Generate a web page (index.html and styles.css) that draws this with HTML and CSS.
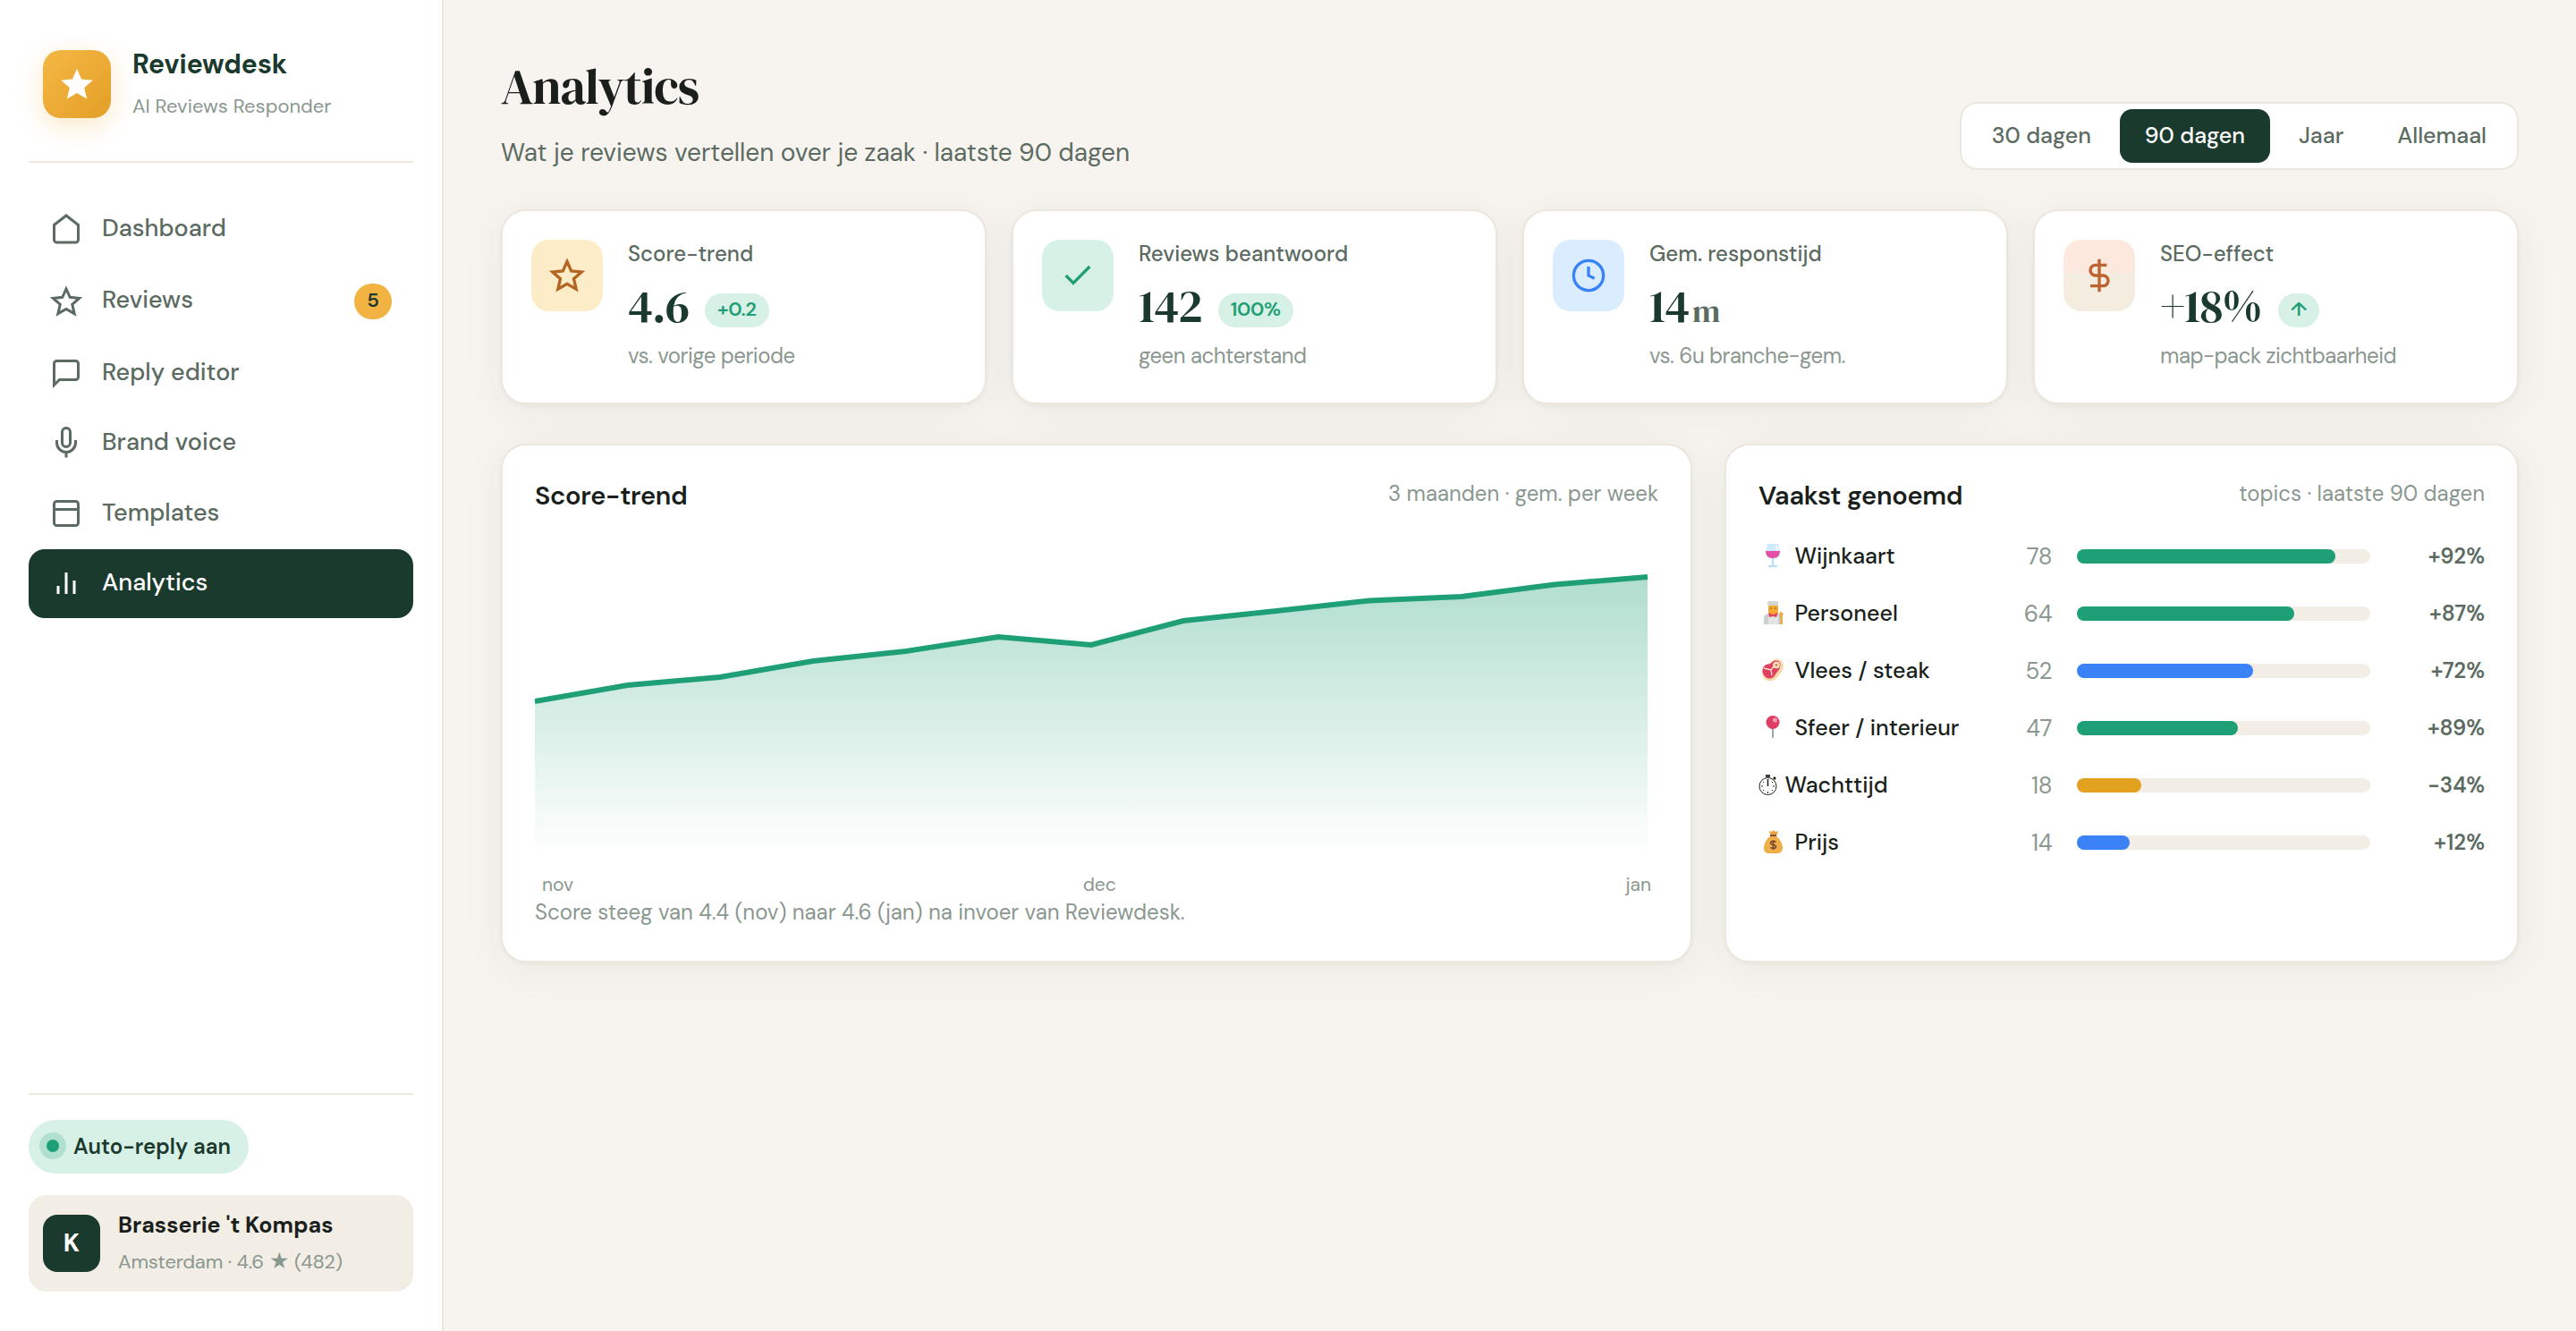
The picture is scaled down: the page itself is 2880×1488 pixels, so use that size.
FILE: index.html
```
<!DOCTYPE html>
<html lang="nl">
<head>
  <meta charset="UTF-8" />
  <meta name="viewport" content="width=device-width, initial-scale=1.0" />
  <title>Reviewdesk - Analytics</title>
  <link rel="stylesheet" href="styles.css">
</head>
<body>
  <aside class="sidebar">
    <div class="brand">
      <div class="brand-logo">
        <svg width="38" height="38" viewBox="0 0 24 24" fill="#fff"><path d="M12 1.2l3.2 7.4 8 .7-6 5.2 1.8 7.9L12 18.3l-7 4.1 1.8-7.9-6-5.2 8-.7z"/></svg>
      </div>
      <div class="brand-text">
        <div class="brand-name">Reviewdesk</div>
        <div class="brand-sub">AI Reviews Responder</div>
      </div>
    </div>

    <nav class="nav">
      <a class="nav-item"><svg viewBox="0 0 24 24"><path d="M3 9l9-7 9 7v11a2 2 0 0 1-2 2H5a2 2 0 0 1-2-2z"/></svg>Dashboard</a>
      <a class="nav-item"><svg viewBox="0 0 24 24"><path d="M12 2.6l2.8 6.3 7 .7-5.3 4.6 1.6 6.9L12 17.6l-6.1 3.5 1.6-6.9-5.3-4.6 7-.7z"/></svg>Reviews<span class="nav-badge">5</span></a>
      <a class="nav-item"><svg viewBox="0 0 24 24"><path d="M21 15a2 2 0 0 1-2 2H7l-4 4V5a2 2 0 0 1 2-2h14a2 2 0 0 1 2 2z"/></svg>Reply editor</a>
      <a class="nav-item"><svg viewBox="0 0 24 24"><path d="M12 1a3 3 0 0 0-3 3v8a3 3 0 0 0 6 0V4a3 3 0 0 0-3-3z"/><path d="M19 10v2a7 7 0 0 1-14 0v-2M12 19v4"/></svg>Brand voice</a>
      <a class="nav-item"><svg viewBox="0 0 24 24"><rect x="3" y="3" width="18" height="18" rx="2"/><path d="M3 9h18"/></svg>Templates</a>
      <a class="nav-item active"><svg viewBox="0 0 24 24"><path d="M18 20V10M12 20V4M6 20v-6"/></svg>Analytics</a>
    </nav>

    <div class="sidebar-bottom">
      <div class="status"><span class="status-dot"></span>Auto-reply aan</div>
      <div class="account">
        <div class="avatar">K</div>
        <div class="account-text">
          <div class="account-name">Brasserie 't Kompas</div>
          <div class="account-sub">Amsterdam · 4.6 ★ (482)</div>
        </div>
      </div>
    </div>
  </aside>

  <main class="main">
    <header class="page-header">
      <div>
        <h1>Analytics</h1>
        <p>Wat je reviews vertellen over je zaak · laatste 90 dagen</p>
      </div>
      <div class="range">
        <button>30 dagen</button>
        <button class="active">90 dagen</button>
        <button>Jaar</button>
        <button>Allemaal</button>
      </div>
    </header>

    <section class="kpis">
      <div class="card kpi">
        <div class="kpi-icon amber"><svg viewBox="0 0 24 24"><path d="M12 2.6l2.8 6.3 7 .7-5.3 4.6 1.6 6.9L12 17.6l-6.1 3.5 1.6-6.9-5.3-4.6 7-.7z"/></svg></div>
        <div>
          <div class="kpi-label">Score-trend</div>
          <div class="kpi-row"><span class="kpi-value">4.6</span><span class="pill">+0.2</span></div>
          <div class="kpi-sub">vs. vorige periode</div>
        </div>
      </div>
      <div class="card kpi">
        <div class="kpi-icon mint"><svg viewBox="0 0 24 24"><path d="M20 6L9 17l-5-5"/></svg></div>
        <div>
          <div class="kpi-label">Reviews beantwoord</div>
          <div class="kpi-row"><span class="kpi-value">142</span><span class="pill">100%</span></div>
          <div class="kpi-sub">geen achterstand</div>
        </div>
      </div>
      <div class="card kpi">
        <div class="kpi-icon blue"><svg viewBox="0 0 24 24"><circle cx="12" cy="12" r="10"/><path d="M12 6v6l4 2"/></svg></div>
        <div>
          <div class="kpi-label">Gem. responstijd</div>
          <div class="kpi-row"><span class="kpi-value">14<small>m</small></span></div>
          <div class="kpi-sub">vs. 6u branche-gem.</div>
        </div>
      </div>
      <div class="card kpi">
        <div class="kpi-icon peach"><svg viewBox="0 0 24 24"><path d="M12 1v22M17 5H9.500a3.500 3.500 0 0 0 0 7h5a3.500 3.500 0 0 1 0 7H6"/></svg></div>
        <div>
          <div class="kpi-label">SEO-effect</div>
          <div class="kpi-row"><span class="kpi-value">+18%</span><span class="pill">↑</span></div>
          <div class="kpi-sub">map-pack zichtbaarheid</div>
        </div>
      </div>
    </section>

    <section class="panels">
      <div class="card panel">
        <div class="panel-head"><h2>Score-trend</h2><span>3 maanden · gem. per week</span></div>
        <svg class="chart" viewBox="0 0 1256 353">
          <defs>
            <linearGradient id="fill" x1="0" y1="0" x2="0" y2="1">
              <stop offset="0" stop-color="#1f9f76" stop-opacity=".35"/>
              <stop offset="1" stop-color="#1f9f76" stop-opacity="0"/>
            </linearGradient>
          </defs>
          <path fill="url(#fill)" d="M0 180L103.700 162 207 153 311 135 415 124 518 108 622 117 725 90 829 79 933 67.500 1036 63 1140 49.500 1244 41V353H0z"/>
          <path class="chart-line" d="M0 180L103.700 162 207 153 311 135 415 124 518 108 622 117 725 90 829 79 933 67.500 1036 63 1140 49.500 1244 41"/>
        </svg>
        <div class="chart-labels"><span>nov</span><span>dec</span><span>jan</span></div>
        <div class="chart-note">Score steeg van 4.4 (nov) naar 4.6 (jan) na invoer van Reviewdesk.</div>
      </div>

      <div class="card panel">
        <div class="panel-head"><h2>Vaakst genoemd</h2><span>topics · laatste 90 dagen</span></div>
        <ul class="topics">
          <li>
            <span class="topic"><svg width="32" height="26" viewBox="0 0 32 26"><path fill="#cfeafc" d="M10 0h12l2 9c0 5-3 8-8 8s-8-3-8-8z"/><path fill="#e64fa6" d="M8 8h16c0 5-3 8-8 8s-8-3-8-8z"/><path fill="#b5def7" d="M15 16h2v8h4v2H11v-2h4z"/><path fill="#fff" d="M19 2h2l1 5h-2z"/></svg> Wijnkaart</span>
            <span class="count">78</span><span class="bar"><i class="green" style="width: 88%"></i></span><span class="pct">+92%</span>
          </li>
          <li>
            <span class="topic"><svg width="32" height="26" viewBox="0 0 32 26"><path fill="#c9d0cf" d="M6 26v-7c0-3 3-5 6-5h9c3 0 4 2 4 5v7z"/><path fill="#e2e5e4" d="M11 14h11v12H11z"/><rect x="11" y="3" width="11" height="12" rx="4" fill="#f5a92f"/><path fill="#d3d6d3" d="M9.500 1c3-1.500 10-1.500 13 0L22 5H10.500z"/><path fill="#5b4a3a" d="M13.500 7.500h1.500v1h-1.500zM18 7.500h1.500v1H18z"/><path fill="#e2445f" d="M11 13l5 2 6-2-2 5-4-1-4 1z"/><path fill="#e9ab4f" d="M25 12c3 0 3 4 2 5v9h-3v-9c-1-2-1-5 1-5z"/></svg> Personeel</span>
            <span class="count">64</span><span class="bar"><i class="green" style="width: 74%"></i></span><span class="pct">+87%</span>
          </li>
          <li>
            <span class="topic"><svg width="32" height="26" viewBox="0 0 32 26"><path fill="#f8d9a8" d="M16 2c5-3 12 0 12 6 0 6-4 9-7 13-4 6-12 5-15 1C2 17 5 8 11 6c2-1 3-3 5-4z"/><path fill="#df3f62" d="M17 3c5-2 9 2 7 7-1 4-4 5-5 8-2 5-9 6-12 2C2 14 5 7 11 6.500c3 0 4-2.500 6-3.500z"/><circle cx="20" cy="7.500" r="3.800" fill="#fbe6c4"/><circle cx="20" cy="7.500" r="1.600" fill="#c08a55"/><path fill="none" stroke="#fbe6c4" stroke-width="1.300" d="M6 11l8 2 3-4M14 13l1 6"/></svg> Vlees / steak</span>
            <span class="count">52</span><span class="bar"><i class="blue" style="width: 60%"></i></span><span class="pct">+72%</span>
          </li>
          <li>
            <span class="topic"><svg width="32" height="26" viewBox="0 0 32 26"><path fill="#9aa5a8" d="M15 14h2v10l-1 2-1-2z"/><circle cx="16" cy="7.500" r="7.500" fill="#df3f62"/><circle cx="18.500" cy="5" r="2.500" fill="#f29bb5"/></svg> Sfeer / interieur</span>
            <span class="count">47</span><span class="bar"><i class="green" style="width: 55%"></i></span><span class="pct">+89%</span>
          </li>
          <li>
            <span class="topic"><svg width="21" height="24" viewBox="0 0 21 24"><g fill="none" stroke="#1a1f1c"><circle cx="10.500" cy="13" r="9.500"/><path stroke-width="2.500" d="M8 1.500h5M17 3l2 2"/><path stroke-width="1.500" d="M10.500 5v8"/><path d="M10.500 19v2M3 13h2M16 13h2M5 8l1 1M16 8l-1 1M5 18l1-1M16 18l-1-1"/></g></svg> Wachttijd</span>
            <span class="count">18</span><span class="bar"><i class="gold" style="width: 22%"></i></span><span class="pct">-34%</span>
          </li>
          <li>
            <span class="topic"><svg width="32" height="26" viewBox="0 0 32 26"><path fill="#e8a33c" d="M12 1l3 1 2-2 2 2 3-1-2 6h-6z"/><path fill="#eeae48" d="M13 7h7c4 3 7 8 7 13 0 4-3 6-6 6h-9c-4 0-6-2-6-6 0-5 3-10 7-13z"/><path fill="#8a4f35" d="M13 5h7v2h-7z"/><path fill="none" stroke="#754632" stroke-width="1.500" d="M19.500 13.500c-1-1.500-6-1.500-6 1s6 1.500 6 4-5 2.500-6 .5M16.500 11v11"/></svg> Prijs</span>
            <span class="count">14</span><span class="bar"><i class="blue" style="width: 18%"></i></span><span class="pct">+12%</span>
          </li>
        </ul>
      </div>
    </section>
  </main>
</body>
</html>
```

FILE: styles.css
```
* {
  box-sizing: border-box;
}
body {
  margin: 0;
  display: flex;
  min-height: 100vh;
  background: #f7f4ef;
  color: #1a1f1c;
  font-family: 'DM Sans', Inter, sans-serif;
}
h1, h2, p, ul {
  margin: 0;
  padding: 0;
}

/* sidebar */
.sidebar {
  width: 496px;
  flex: none;
  display: flex;
  flex-direction: column;
  padding: 54px 32px 44px;
  background: #fff;
  border-right: 2px solid #ede6dc;
}
.brand {
  display: flex;
  align-items: center;
  gap: 24px;
  height: 128px;
  padding: 0 16px 46px;
  border-bottom: 2px solid #ede6dc;
}
.brand-logo {
  width: 76px;
  height: 76px;
  flex: none;
  display: flex;
  align-items: center;
  justify-content: center;
  border-radius: 20px;
  background: linear-gradient(135deg, #f5b845, #e39f27);
  box-shadow: 0 8px 28px rgba(242, 179, 66, 0.3);
}
.brand-text {
  margin-top: -3px;
}
.brand-name {
  font-size: 30px;
  font-weight: 700;
  color: #1b3a2e;
}
.brand-sub {
  margin-top: 13px;
  font-size: 22px;
  color: #8a978f;
}
.nav {
  display: flex;
  flex-direction: column;
  gap: 2px;
  margin-top: 36px;
}
.nav-item {
  display: flex;
  align-items: center;
  padding: 19px 24px 21px;
  font-size: 27px;
  line-height: 36.5px;
  font-weight: 500;
  color: #5c6b62;
  border-radius: 18px;
}
.nav-item svg {
  width: 36px;
  height: 36px;
  margin: 1px 22px -1px 0;
  fill: none;
  stroke: currentColor;
  stroke-width: 2;
}
.nav-item.active {
  background: #1b3a2e;
  color: #fff;
}
.nav-badge {
  margin: 1px 0 -1px auto;
  width: 42px;
  height: 40px;
  border-radius: 20px;
  background: #f2b342;
  color: #1b3a2e;
  font-size: 22px;
  font-weight: 600;
  line-height: 37px;
  text-align: center;
}
.sidebar-bottom {
  margin-top: auto;
  padding-top: 28px;
  border-top: 2px solid #ede8dc;
}
.status {
  display: inline-flex;
  align-items: center;
  gap: 16px;
  height: 60px;
  padding: 0 20px 2px;
  border-radius: 30px;
  background: #d8f1e6;
  color: #1b3a2e;
  font-size: 24px;
  font-weight: 600;
}
.status-dot {
  width: 14px;
  height: 14px;
  border-radius: 50%;
  background: #1f9f76;
  box-shadow: 0 0 0 8px rgba(31, 159, 118, 0.2);
}
.account {
  display: flex;
  align-items: center;
  gap: 20px;
  height: 108px;
  margin-top: 24px;
  padding: 0 16px;
  border-radius: 20px;
  background: #f2ede5;
}
.avatar {
  width: 64px;
  height: 64px;
  border-radius: 16px;
  background: #1b3a2e;
  color: #fff;
  font-size: 28px;
  font-weight: 700;
  line-height: 64px;
  text-align: center;
}
.account-text {
  margin-top: -2px;
}
.account-name {
  font-size: 25px;
  font-weight: 700;
}
.account-sub {
  margin-top: 10px;
  font-size: 22px;
  line-height: 29px;
  letter-spacing: -0.008em;
  color: #8a978f;
}

/* main */
.main {
  flex: 1;
  padding: 66px 64px 64px;
}
.page-header {
  display: flex;
  justify-content: space-between;
  align-items: flex-end;
}
h1 {
  font-family: 'DM Serif Display', 'Liberation Serif', serif;
  font-size: 56px;
  font-weight: 400;
  line-height: 62px;
  letter-spacing: -0.02em;
}
.page-header p {
  margin-top: 24px;
  font-size: 28px;
  line-height: 38px;
  color: #5c6b62;
}
.range {
  display: flex;
  gap: 4px;
  padding: 6px;
  background: #fff;
  border: 2px solid #ede6dc;
  border-radius: 20px;
}
.range button {
  height: 60px;
  padding: 0 28px 2px;
  border: none;
  border-radius: 14px;
  background: none;
  color: #5c6b62;
  font-family: inherit;
  font-size: 25px;
  font-weight: 500;
}
.range .active {
  background: #1b3a2e;
  color: #fff;
}
.card {
  background: #fff;
  border: 2px solid #ede6dc;
  border-radius: 28px;
  box-shadow: 0 2px 4px rgba(27, 58, 46, 0.04), 0 8px 48px rgba(27, 58, 46, 0.06);
}
.kpis {
  display: grid;
  grid-template-columns: repeat(4, 1fr);
  gap: 28px;
  margin-top: 44px;
}
.kpi {
  display: flex;
  gap: 28px;
  height: 218px;
  padding: 32px;
}
.kpi-icon {
  width: 80px;
  height: 80px;
  flex: none;
  display: flex;
  align-items: center;
  justify-content: center;
  border-radius: 20px;
}
.kpi-icon svg {
  width: 40px;
  height: 40px;
  fill: none;
  stroke: currentColor;
  stroke-width: 2;
}
.amber { background: #fcedc8; color: #b56522; }
.mint { background: #d8f1e6; color: #1f9f76; }
.kpi-icon.blue { background: #d9edfe; color: #3b82f6; }
.peach { background: linear-gradient(#fce8dc 46%, #f4ecdf 46%); color: #bd622d; }
.kpi-label {
  font-size: 24px;
  font-weight: 500;
  color: #5c6b62;
}
.kpi-row {
  display: flex;
  align-items: flex-end;
  gap: 18px;
  height: 52px;
  margin-top: 17px;
}
.kpi-value {
  height: 52px;
  font-family: 'DM Serif Display', 'Liberation Serif', serif;
  font-size: 52px;
  line-height: 52px;
  letter-spacing: -0.02em;
  color: #1b3a2e;
}
.kpi-value small {
  margin-left: 4px;
  font-size: 36px;
  line-height: 0;
  color: #5c6b62;
}
.pill {
  height: 38px;
  margin-bottom: 2px;
  padding: 0 14px;
  border-radius: 19px;
  background: #d8f1e6;
  color: #1f9f76;
  font-size: 22px;
  font-weight: 600;
  line-height: 36px;
  letter-spacing: -0.015em;
}
.kpi-sub {
  margin-top: 14px;
  font-size: 24px;
  letter-spacing: -0.02em;
  color: #8a978f;
}
.panels {
  display: grid;
  grid-template-columns: 1.5fr 1fr;
  gap: 36px;
  margin-top: 44px;
}
.panel {
  height: 580px;
  padding: 36px;
}
.panel-head {
  display: flex;
  justify-content: space-between;
}
.panel-head span {
  margin-top: 2px;
  font-size: 24px;
  color: #8a978f;
}
h2 {
  font-size: 29px;
  font-weight: 600;
  line-height: 40px;
  letter-spacing: -0.01em;
}
.chart {
  display: block;
  width: 100%;
  height: 353px;
  margin-top: 30px;
}
.chart-line {
  fill: none;
  stroke: #1f9f76;
  stroke-width: 6;
}
.chart-labels {
  display: flex;
  justify-content: space-between;
  margin-top: 18px;
  padding: 0 8px;
  font-size: 21px;
  color: #8a978f;
}
.chart-note {
  margin-top: 1px;
  font-size: 24px;
  color: #8a978f;
}
.topics {
  margin-top: 16px;
  list-style: none;
}
.topics li {
  display: grid;
  grid-template-columns: 1fr 60px 328px 100px;
  align-items: center;
  gap: 28px;
  height: 64px;
}
.topic {
  padding-bottom: 1px;
  font-size: 25px;
  font-weight: 500;
  white-space: nowrap;
}
.topic svg {
  margin-right: 2px;
  vertical-align: -4px;
}
.count {
  padding-bottom: 1px;
  font-size: 26px;
  letter-spacing: -0.018em;
  color: #8a978f;
  text-align: right;
}
.bar {
  height: 16px;
  border-radius: 8px;
  background: #f2ede5;
}
.bar i {
  display: block;
  height: 16px;
  border-radius: 8px;
}
.bar .green { background: #1f9f76; }
.bar .blue { background: #3b82f6; }
.bar .gold { background: #e2a11f; }
.pct {
  padding-bottom: 2px;
  font-size: 24px;
  font-weight: 600;
  color: #5c6b62;
  text-align: right;
}
```
